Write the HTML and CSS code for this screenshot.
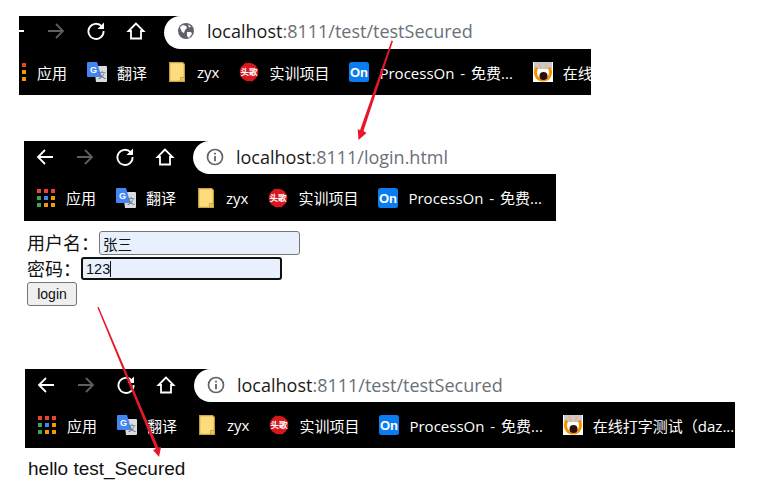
FILE: index.html
```html
<!DOCTYPE html>
<html lang="zh-CN">
<head>
    <meta charset="UTF-8">
    <title>testSecured</title>
    <link rel="stylesheet" href="styles.css">
</head>
<body>
    <svg class="defs" width="0" height="0">
        <defs>
            <symbol id="i-back" viewBox="0 0 20 20"><path d="M18 10H3M10 3l-7 7 7 7" fill="none" stroke="currentColor" stroke-width="1.800"/></symbol>
            <symbol id="i-forward" viewBox="0 0 20 20"><path d="M2 10h15M10 3l7 7-7 7" fill="none" stroke="currentColor" stroke-width="1.800"/></symbol>
            <symbol id="i-reload" viewBox="0 0 20 20"><path d="M15.600 5.200A7.600 7.600 0 1 0 17.600 10" fill="none" stroke="currentColor" stroke-width="1.800"/><path d="M11.500 8H18V1.500z" fill="currentColor"/></symbol>
            <symbol id="i-home" viewBox="0 0 20 20"><path d="M10 2.500 2.500 10H5v7.500h10V10h2.500z" fill="none" stroke="currentColor" stroke-width="1.800"/></symbol>
            <symbol id="i-globe" viewBox="0 0 18 18"><circle cx="9" cy="9" r="8" fill="#5f6368"/><path d="M3 5l3-2 3 1 1 2-2 2-1 3-2-1-1-2zM10 10h4l1 2-3 4-2-2zM11 2.500l3 2-2 1z" fill="#fff"/></symbol>
            <symbol id="i-info" viewBox="0 0 18 18"><circle cx="9" cy="9" r="7.500" fill="none" stroke="#5f6368" stroke-width="1.700"/><path d="M8.100 8h1.800v5.200H8.100zM8.100 4.800h1.800v1.800H8.100z" fill="#5f6368"/></symbol>
            <symbol id="i-apps" viewBox="-1 -1 20 20">
                <rect x="0" y="0" width="4" height="4" fill="#ea4335"/><rect x="7" y="0" width="4" height="4" fill="#ea4335"/><rect x="14" y="0" width="4" height="4" fill="#ea4335"/>
                <rect x="0" y="7" width="4" height="4" fill="#34a853"/><rect x="7" y="7" width="4" height="4" fill="#4285f4"/><rect x="14" y="7" width="4" height="4" fill="#f29900"/>
                <rect x="0" y="14" width="4" height="4" fill="#34a853"/><rect x="7" y="14" width="4" height="4" fill="#f29900"/><rect x="14" y="14" width="4" height="4" fill="#f29900"/>
            </symbol>
            <symbol id="i-translate" viewBox="0 0 20 20">
                <path d="M7 4h12a1 1 0 0 1 1 1v14a1 1 0 0 1-1 1H9z" fill="#dadce0"/>
                <path d="M1 0h9l4.500 15H1a1 1 0 0 1-1-1V1a1 1 0 0 1 1-1z" fill="#4285f4"/>
                <text x="3" y="10.500" class="ico-g">G</text>
                <text x="11" y="16" class="ico-wen">文</text>
            </symbol>
            <symbol id="i-folder" viewBox="-2 0 20 20">
                <path d="M.7.700h13l1.600 1.600v17H.7z" fill="#fddc7e" stroke="#c9a63e" stroke-width="1.200"/>
                <path d="M11.500 19.300V15.500h3.800v3.800z" fill="#f2c85a" stroke="#c9a63e" stroke-width="1"/>
            </symbol>
            <symbol id="i-toutiao" viewBox="0 0 20 20">
                <circle cx="10" cy="10" r="9.300" fill="#d8181f"/>
                <path d="M2 6 7 0 8.500 4zM18 14l-5 6-1.500-4z" fill="#d8181f"/>
                <text x="10" y="13.200" class="ico-tou">头歌</text>
            </symbol>
            <symbol id="i-on" viewBox="0 0 20 20">
                <rect width="20" height="20" rx="2.500" fill="#0a7cf0"/>
                <text x="10" y="15" class="ico-on">On</text>
            </symbol>
            <symbol id="i-typing" viewBox="0 0 20 20">
                <rect width="20" height="20" fill="#fff"/>
                <rect x="1" y="0" width="18" height="7" fill="#c9c9c9"/>
                <path d="M4 5.500C.5 11 3.500 18 10 18s9.500-7 6-12.500" fill="none" stroke="#f29400" stroke-width="3"/>
                <path d="M6 1l2 6M14 1l-2 6" stroke="#e8b48c" stroke-width="2"/>
                <circle cx="10.500" cy="14" r="4" fill="#2a0f0a"/>
            </symbol>
        </defs>
    </svg>

    <div class="browser browser-first">
        <div class="toolbar toolbar-cut">
            <div class="nav">
                <svg class="nav-icon"><use href="#i-back"/></svg>
                <svg class="nav-icon dim"><use href="#i-forward"/></svg>
                <svg class="nav-icon"><use href="#i-reload"/></svg>
                <svg class="nav-icon"><use href="#i-home"/></svg>
            </div>
            <div class="omnibox">
                <svg class="site-icon"><use href="#i-globe"/></svg>
                <span class="url"><b>localhost</b>:8111/test/testSecured</span>
            </div>
        </div>
        <div class="bookmarks bookmarks-cut">
            <div class="mark"><svg class="mark-icon"><use href="#i-apps"/></svg>应用</div>
            <div class="mark"><svg class="mark-icon"><use href="#i-translate"/></svg>翻译</div>
            <div class="mark"><svg class="mark-icon"><use href="#i-folder"/></svg>zyx</div>
            <div class="mark"><svg class="mark-icon"><use href="#i-toutiao"/></svg>实训项目</div>
            <div class="mark"><svg class="mark-icon"><use href="#i-on"/></svg>ProcessOn - 免费...</div>
            <div class="mark"><svg class="mark-icon"><use href="#i-typing"/></svg>在线打字测试（daz...</div>
        </div>
    </div>

    <div class="browser browser-login">
        <div class="toolbar">
            <div class="nav">
                <svg class="nav-icon"><use href="#i-back"/></svg>
                <svg class="nav-icon dim"><use href="#i-forward"/></svg>
                <svg class="nav-icon"><use href="#i-reload"/></svg>
                <svg class="nav-icon"><use href="#i-home"/></svg>
            </div>
            <div class="omnibox">
                <svg class="site-icon"><use href="#i-info"/></svg>
                <span class="url"><b>localhost</b>:8111/login.html</span>
            </div>
        </div>
        <div class="bookmarks bookmarks-tall">
            <div class="mark"><svg class="mark-icon"><use href="#i-apps"/></svg>应用</div>
            <div class="mark"><svg class="mark-icon"><use href="#i-translate"/></svg>翻译</div>
            <div class="mark"><svg class="mark-icon"><use href="#i-folder"/></svg>zyx</div>
            <div class="mark"><svg class="mark-icon"><use href="#i-toutiao"/></svg>实训项目</div>
            <div class="mark"><svg class="mark-icon"><use href="#i-on"/></svg>ProcessOn - 免费...</div>
        </div>
    </div>

    <form class="login-form">
        <div class="row">
            <label for="username">用户名：</label>
            <input type="text" id="username" class="field" value="张三">
        </div>
        <div class="row">
            <label for="password">密码：</label>
            <div class="field field-focus">123<span class="caret"></span></div>
        </div>
        <button type="button" class="login-btn">login</button>
    </form>

    <div class="browser browser-result">
        <div class="toolbar">
            <div class="nav">
                <svg class="nav-icon"><use href="#i-back"/></svg>
                <svg class="nav-icon dim"><use href="#i-forward"/></svg>
                <svg class="nav-icon"><use href="#i-reload"/></svg>
                <svg class="nav-icon"><use href="#i-home"/></svg>
            </div>
            <div class="omnibox">
                <svg class="site-icon"><use href="#i-info"/></svg>
                <span class="url"><b>localhost</b>:8111/test/testSecured</span>
            </div>
        </div>
        <div class="bookmarks">
            <div class="mark"><svg class="mark-icon"><use href="#i-apps"/></svg>应用</div>
            <div class="mark"><svg class="mark-icon"><use href="#i-translate"/></svg>翻译</div>
            <div class="mark"><svg class="mark-icon"><use href="#i-folder"/></svg>zyx</div>
            <div class="mark"><svg class="mark-icon"><use href="#i-toutiao"/></svg>实训项目</div>
            <div class="mark"><svg class="mark-icon"><use href="#i-on"/></svg>ProcessOn - 免费...</div>
            <div class="mark"><svg class="mark-icon"><use href="#i-typing"/></svg>在线打字测试（daz...</div>
        </div>
    </div>

    <p class="hello">hello test_Secured</p>

    <!-- red arrows drawn over the screenshots -->
    <svg class="arrows" width="775" height="496">
        <path d="M391.500 40.500 393 41 363.500 131 366.500 133 358.500 140 357.700 129 360 130.200z" fill="#e6192b"/>
        <path d="M97.300 307.300 98.700 306.900 158.400 447.500 161 447 159 457 153 450 155.600 449z" fill="#e6192b"/>
    </svg>
</body>
</html>
```

FILE: styles.css
```css
* {
    box-sizing: border-box;
}
html, body {
    height: 100%;
}
body {
    font-family: "Liberation Sans", "Noto Sans CJK SC", sans-serif;
    background-color: #fff;
    color: #111;
    margin: 0;
    padding-top: 16px;
    position: relative;
    overflow: hidden;
}
.defs {
    display: block;
    height: 0;
}
.browser {
    overflow: hidden;
}
.browser-first {
    width: 572px;
    margin-left: 19px;
}
.browser-login {
    width: 532px;
    margin-left: 24px;
    margin-top: 46px;
}
.browser-result {
    width: 710px;
    margin-left: 25px;
    margin-top: 63px;
}
.toolbar {
    display: flex;
    height: 33px;
    background-color: #000;
}
.nav {
    display: flex;
    align-items: center;
    flex: none;
    width: 169px;
    padding-left: 11px;
    padding-bottom: 1px;
    gap: 20px;
}
.toolbar-cut .nav {
    margin-left: -24px;
    padding-bottom: 3px;
}
.nav-icon {
    width: 20px;
    height: 20px;
    flex: none;
    color: #fff;
}
.nav-icon.dim {
    color: #5f5f5f;
}
.omnibox {
    flex: 1;
    display: flex;
    align-items: center;
    background-color: #fff;
    border-radius: 17px 0 0 17px;
    padding-left: 13px;
    padding-bottom: 2px;
    white-space: nowrap;
}
.toolbar-cut .omnibox {
    padding-bottom: 4px;
}
.site-icon {
    width: 18px;
    height: 18px;
    flex: none;
    margin-right: 12px;
}
.url {
    font-family: "Open Sans", "Noto Sans", sans-serif;
    font-size: 18px;
    color: #6a7078;
}
.url b {
    font-weight: normal;
    color: #1a1a1a;
}
.bookmarks {
    display: flex;
    align-items: center;
    height: 46px;
    background-color: #000;
    padding-left: 12px;
    gap: 20px;
    white-space: nowrap;
}
.bookmarks-tall {
    height: 47px;
}
.bookmarks-cut {
    margin-left: -24px;
}
.mark {
    display: flex;
    align-items: center;
    gap: 10px;
    color: #fff;
    font-family: "Open Sans", "Noto Sans CJK SC", sans-serif;
    font-size: 15px;
    word-spacing: 2px;
    flex: none;
}
.mark-icon {
    width: 20px;
    height: 20px;
    flex: none;
}
.ico-g {
    font: bold 9px "Liberation Sans", sans-serif;
    fill: #fff;
}
.ico-wen {
    font: 8px "Noto Sans CJK SC", sans-serif;
    fill: #666;
}
.ico-tou {
    font: bold 8.500px "Noto Sans CJK SC", sans-serif;
    fill: #fff;
    text-anchor: middle;
}
.ico-on {
    font: bold 13px "Liberation Sans", sans-serif;
    fill: #fff;
    text-anchor: middle;
}
.login-form {
    margin: 9px 0 0 27px;
}
.row {
    display: flex;
    align-items: center;
    height: 26px;
}
.row label {
    font-size: 18px;
    flex: none;
    padding-bottom: 2px;
}
.field {
    width: 201px;
    height: 24px;
    padding: 0 3px;
    font-family: "Liberation Sans", "Noto Sans CJK SC", sans-serif;
    font-size: 14.500px;
    color: #111;
    background-color: #e8f0fe;
    border: 1px solid #767676;
    border-radius: 3px;
    outline: none;
}
.field-focus {
    display: flex;
    align-items: center;
    height: 23px;
    margin-bottom: 1px;
    border: 2px solid #101010;
    padding: 0 3px;
}
.caret {
    display: inline-block;
    width: 1px;
    height: 16px;
    background-color: #111;
}
.login-btn {
    display: block;
    width: 50px;
    height: 24px;
    margin-top: 0;
    padding: 0;
    font-family: "Liberation Sans", sans-serif;
    font-size: 14px;
    color: #111;
    background-color: #efefef;
    border: 1px solid #767676;
    border-radius: 3px;
}
.hello {
    margin: 10px 0 0 28px;
    font-size: 19px;
    line-height: 22px;
}
.arrows {
    position: absolute;
    left: 0;
    top: 0;
    pointer-events: none;
}
```
